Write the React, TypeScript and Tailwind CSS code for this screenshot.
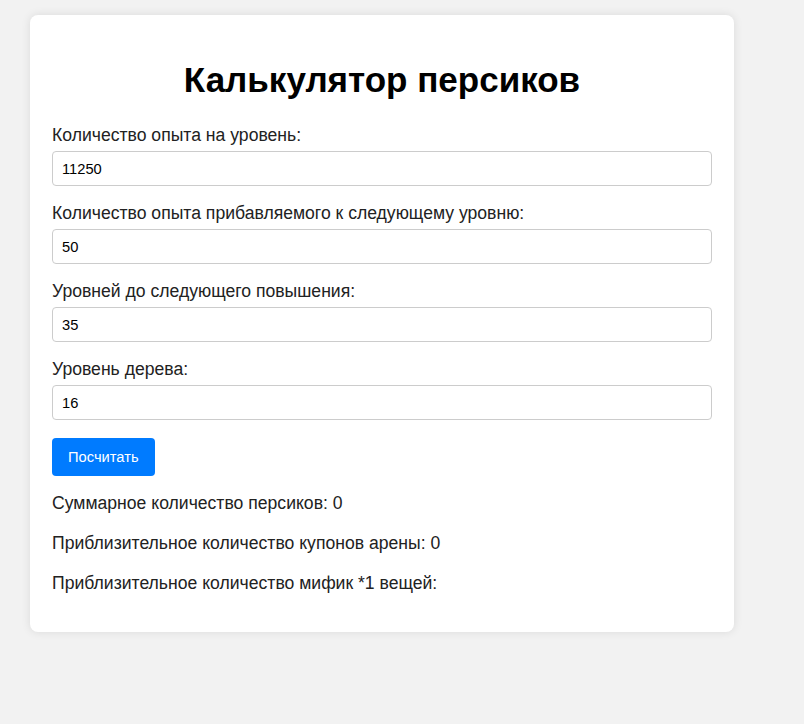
export default function App() {
  const fields = [
    { label: "Количество опыта на уровень:", value: "11250" },
    { label: "Количество опыта прибавляемого к следующему уровню:", value: "50" },
    { label: "Уровней до следующего повышения:", value: "35" },
    { label: "Уровень дерева:", value: "16" },
  ];

  return (
    <div className="min-h-[724px] bg-[#f2f2f2] pt-[15px] font-['Liberation_Sans',Arial,sans-serif]">
      <div className="ml-[30px] w-[704px] rounded-lg bg-white px-[22px] pt-[22px] pb-[22px] shadow-[0_0_10px_rgba(0,0,0,0.1)]">
        <h1 className="mt-[23px] mb-[25px] text-center text-[35px] leading-[40px] font-bold text-black">
          Калькулятор персиков
        </h1>
        {fields.map((f) => (
          <div key={f.label}>
            <label className="mb-[6px] block text-[17.6px] leading-[20px] text-[#222]">{f.label}</label>
            <input
              type="text"
              defaultValue={f.value}
              className="mb-[17px] block h-[35px] w-full rounded border border-[#ccc] px-[9px] text-[14.7px] text-black outline-none"
            />
          </div>
        ))}
        <button
          type="button"
          className="mt-px h-[38px] rounded bg-[#007bff] px-4 text-[14.7px] text-white"
        >
          Посчитать
        </button>
        <p className="mt-[15px] text-[17.6px] leading-6 text-[#222]">Суммарное количество персиков: 0</p>
        <p className="mt-4 text-[17.6px] leading-6 text-[#222]">Приблизительное количество купонов арены: 0</p>
        <p className="mt-4 mb-[15px] text-[17.6px] leading-6 text-[#222]">Приблизительное количество мифик *1 вещей:</p>
      </div>
    </div>
  );
}
